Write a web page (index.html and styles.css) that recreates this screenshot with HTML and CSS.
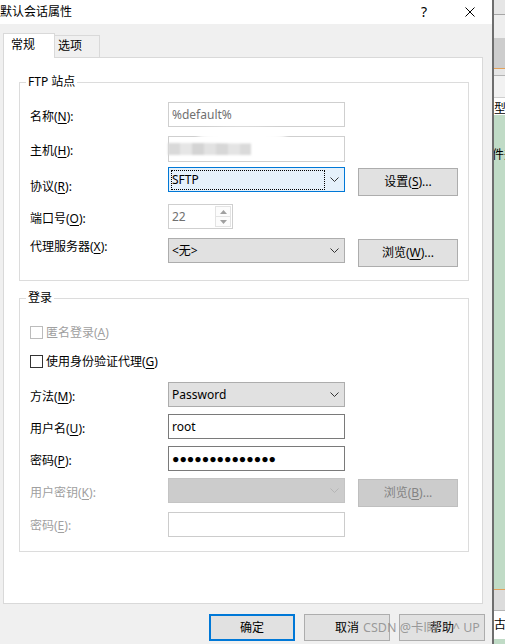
FILE: index.html
```html
<!DOCTYPE html>
<html lang="zh-CN">
<head>
<meta charset="utf-8">
<title>默认会话属性</title>
<link rel="stylesheet" href="styles.css">
</head>
<body>
<div class="screen">
  <div class="dialog">
    <div class="titlebar">
      <span class="title">默认会话属性</span>
      <span class="help">?</span>
      <svg class="close" width="10" height="10" viewBox="0 0 10 10"><path d="M0.5 0.5 L9.5 9.5 M9.5 0.5 L0.5 9.5" stroke="#000" stroke-width="1" fill="none"/></svg>
    </div>
    <div class="body">
      <div class="tabs">
        <div class="tab tab-active">常规</div>
        <div class="tab tab-idle">选项</div>
      </div>
      <div class="panel">
        <fieldset class="group group-ftp">
          <legend>FTP 站点</legend>
          <div class="row h34">
            <span class="lbl">名称(<u>N</u>):</span>
            <div class="field field-soft">%default%</div>
          </div>
          <div class="row h31">
            <span class="lbl">主机(<u>H</u>):</span>
            <div class="field field-soft field-tall">
              <span class="blurred"></span>
              <span class="smudge"></span>
            </div>
          </div>
          <div class="row h37">
            <span class="lbl lbl-low">协议(<u>R</u>):</span>
            <div class="combo combo-focus">
              <span class="focus-rect">SFTP</span>
              <svg class="chev" width="9" height="5" viewBox="0 0 9 5"><polyline points="0.5,0.5 4.5,4.5 8.5,0.5" fill="none" stroke="#333" stroke-width="1"/></svg>
            </div>
            <button class="btn">设置(<u>S</u>)...</button>
          </div>
          <div class="row h34">
            <span class="lbl">端口号(<u>O</u>):</span>
            <div class="spin">
              <span class="spin-val">22</span>
              <span class="spin-btns">
                <span class="spin-btn"><svg width="7" height="4" viewBox="0 0 7 4"><polygon points="3.5,0 7,4 0,4" fill="#a0a0a0"/></svg></span>
                <span class="spin-btn"><svg width="7" height="4" viewBox="0 0 7 4"><polygon points="0,0 7,0 3.5,4" fill="#a0a0a0"/></svg></span>
              </span>
            </div>
          </div>
          <div class="row h29">
            <span class="lbl lbl-high">代理服务器(<u>X</u>):</span>
            <div class="combo">
              <span>&lt;无&gt;</span>
              <svg class="chev" width="9" height="5" viewBox="0 0 9 5"><polyline points="0.5,0.5 4.5,4.5 8.5,0.5" fill="none" stroke="#333" stroke-width="1"/></svg>
            </div>
            <button class="btn">浏览(<u>W</u>)...</button>
          </div>
        </fieldset>

        <fieldset class="group group-login">
          <legend>登录</legend>
          <div class="row h29 check-row disabled">
            <span class="checkbox checkbox-disabled"></span>
            <span>匿名登录(<u>A</u>)</span>
          </div>
          <div class="row h28 check-row">
            <span class="checkbox"></span>
            <span>使用身份验证代理(<u>G</u>)</span>
          </div>
          <div class="row h32">
            <span class="lbl">方法(<u>M</u>):</span>
            <div class="combo">
              <span>Password</span>
              <svg class="chev" width="9" height="5" viewBox="0 0 9 5"><polyline points="0.5,0.5 4.5,4.5 8.5,0.5" fill="none" stroke="#333" stroke-width="1"/></svg>
            </div>
          </div>
          <div class="row h32">
            <span class="lbl">用户名(<u>U</u>):</span>
            <div class="field">root</div>
          </div>
          <div class="row h32">
            <span class="lbl">密码(<u>P</u>):</span>
            <div class="field"><span class="dots">●●●●●●●●●●●●●●</span></div>
          </div>
          <div class="row h34">
            <span class="lbl disabled">用户密钥(<u>K</u>):</span>
            <div class="combo combo-disabled">
              <span></span>
              <svg class="chev" width="9" height="5" viewBox="0 0 9 5"><polyline points="0.5,0.5 4.5,4.5 8.5,0.5" fill="none" stroke="#b5b5b5" stroke-width="1"/></svg>
            </div>
            <button class="btn btn-disabled">浏览(<u>B</u>)...</button>
          </div>
          <div class="row h25">
            <span class="lbl lbl-tight disabled">密码(<u>E</u>):</span>
            <div class="field field-disabled"></div>
          </div>
        </fieldset>
      </div>
      <div class="actions">
        <button class="btn btn-action btn-default">确定</button>
        <button class="btn btn-action">取消</button>
        <button class="btn btn-action">帮助</button>
      </div>
    </div>
    <div class="watermark">CSDN @卡l睡 ^ ^ UP</div>
  </div>
  <div class="backwin">
    <div class="seg s-top"></div>
    <div class="seg line-dark"></div>
    <div class="seg s-light"></div>
    <div class="seg s-mid"></div>
    <div class="seg line-orange"></div>
    <div class="seg s-strip"></div>
    <div class="seg line-grey"></div>
    <div class="seg s-head"></div>
    <div class="seg line-soft"></div>
    <div class="seg s-col">型</div>
    <div class="seg s-green"><span class="green-text">件夹</span></div>
    <div class="seg line-orange"></div>
    <div class="seg s-foot"></div>
    <div class="seg line-grey"></div>
    <div class="seg s-status">古讠</div>
    <div class="seg s-green-end"></div>
  </div>
</div>
</body>
</html>
```
FILE: styles.css
```css
* { box-sizing: border-box; }
html, body { margin: 0; padding: 0; }
body {
  width: 505px;
  height: 644px;
  overflow: hidden;
  font-family: "Noto Sans", "Noto Sans CJK SC", sans-serif;
  font-size: 12px;
  line-height: 16px;
  color: #000;
  background: #f0f0f0;
}
u { text-decoration: underline; text-underline-offset: 2px; }

.screen { display: flex; height: 644px; }

.dialog {
  width: 492px;
  flex: none;
  display: flex;
  flex-direction: column;
  position: relative;
  background: #f0f0f0;
}

/* title bar */
.titlebar {
  height: 24px;
  background: #fff;
  display: flex;
  align-items: center;
}
.title { flex: 1; }
.help {
  width: 14px;
  text-align: center;
  font-size: 14px;
  margin-right: 34px;
}
.close { margin-right: 17px; display: block; }

/* body */
.body {
  flex: 1;
  display: flex;
  flex-direction: column;
  padding: 9px 7px 3px 3px;
}

.tabs {
  display: flex;
  align-items: flex-end;
  height: 24px;
}
.tab {
  border: 1px solid #d9d9d9;
  border-bottom: none;
}
.tab-active {
  width: 52px;
  height: 25px;
  margin-bottom: -1px;
  background: #fff;
  padding: 3px 0 0 7px;
  position: relative;
  z-index: 1;
}
.tab-idle {
  width: 46px;
  height: 22px;
  margin-left: -1px;
  background: #f0f0f0;
  padding: 2px 0 0 3px;
}

.panel {
  width: 480px;
  height: 547px;
  background: #fff;
  border: 1px solid #d9d9d9;
}

/* group boxes */
.group {
  width: 450px;
  margin: 0 0 0 15px;
  border: 1px solid #dcdcdc;
  padding: 12px 0 13px 0;
  min-width: 0;
}
.group legend {
  margin-left: 6px;
  padding: 0 2px;
  line-height: 16px;
}
.group-ftp { margin-top: 16px; }
.group-login { margin-top: 9px; padding-top: 19px; padding-bottom: 14px; }

.row {
  display: flex;
  align-items: flex-start;
  padding-left: 10px;
}
.h25 { height: 25px; }
.h28 { height: 28px; }
.h29 { height: 29px; }
.h31 { height: 31px; }
.h32 { height: 32px; }
.h34 { height: 34px; }
.h37 { height: 37px; }

.lbl { width: 138px; margin-top: 7px; flex: none; }
.lbl-low { margin-top: 12px; }
.lbl-high { margin-top: 1px; }
.lbl-tight { margin-top: 6px; }
.disabled { color: #a0a0a0; }

/* text fields */
.field {
  width: 177px;
  height: 25px;
  border: 1px solid #7a7a7a;
  background: #fff;
  padding: 0 3px;
  display: flex;
  align-items: center;
  position: relative;
}
.field-soft { border-color: #cfcfcf; color: #707070; }
.field-tall { height: 26px; }
.field-disabled { border-color: #cccccc; }

.blurred {
  width: 83px;
  height: 12px;
  margin-left: -4px;
  background: linear-gradient(90deg, #d9d9d9 0 12px, #e6e6e6 12px 24px, #d4d4d4 24px 36px, #e2e2e2 36px 48px, #d7d7d7 48px 60px, #e4e4e4 60px 72px, #dadada 72px 83px);
  filter: blur(1px);
}
.smudge {
  position: absolute;
  left: 28px;
  top: -9px;
  width: 90px;
  height: 14px;
  border-radius: 50%;
  background: #fff;
  filter: blur(2px);
}

.dots {
  font-family: "Liberation Sans", sans-serif;
  font-size: 12.3px;
  letter-spacing: 0;
}

/* combo boxes */
.combo {
  width: 177px;
  height: 25px;
  border: 1px solid #adadad;
  background: #e1e1e1;
  display: flex;
  align-items: center;
  justify-content: space-between;
  padding: 0 5px 0 3px;
  flex: none;
}
.combo-focus {
  border-color: #0078d7;
  background: #e5f1fb;
  padding: 0 5px 0 2px;
}
.focus-rect {
  width: 154px;
  height: 20px;
  border: 1px dotted #000;
  display: flex;
  align-items: center;
}
.combo-disabled {
  background: #cccccc;
  border-color: #c4c4c4;
}
.chev { display: block; }

/* spin */
.spin {
  width: 65px;
  height: 25px;
  border: 1px solid #cfcfcf;
  background: #fff;
  display: flex;
}
.spin-val {
  flex: 1;
  padding-left: 3px;
  display: flex;
  align-items: center;
  color: #707070;
}
.spin-btns {
  width: 17px;
  display: flex;
  flex-direction: column;
  padding: 1px 1px 1px 0;
}
.spin-btn {
  flex: 1;
  display: flex;
  align-items: center;
  justify-content: center;
  border: 1px solid #e3e3e3;
  background: #fcfcfc;
}
.spin-btn + .spin-btn { border-top: none; }
.spin-btn svg { display: block; }

/* buttons */
.btn {
  font: inherit;
  color: #000;
  width: 100px;
  height: 28px;
  margin: 1px 0 0 13px;
  padding: 0;
  border: 1px solid #adadad;
  background: #e1e1e1;
  line-height: 16px;
}
.btn-disabled {
  background: #cccccc;
  border-color: #bfbfbf;
  color: #838383;
}

/* checkboxes */
.check-row { display: flex; align-items: flex-start; }
.check-row > span { line-height: 16px; }
.checkbox {
  width: 13px;
  height: 13px;
  border: 1px solid #333;
  background: #fff;
  margin: 1px 3px 0 0;
  flex: none;
}
.checkbox-disabled { border-color: #bcbcbc; }

/* dialog buttons */
.actions {
  display: flex;
  justify-content: flex-end;
  gap: 9px;
  margin-top: 10px;
}
.btn-action {
  width: 86px;
  height: 27px;
  margin: 0;
}
.btn-default {
  border: 2px solid #0078d7;
}

.watermark {
  position: absolute;
  left: 363px;
  top: 620px;
  color: rgba(140, 140, 140, 0.85);
  font-size: 12.5px;
  white-space: nowrap;
}

/* window behind */
.backwin {
  flex: 1;
  border-left: 2px solid #6e6e6e;
  display: flex;
  flex-direction: column;
  overflow: hidden;
  background: #fff;
}
.seg { flex: none; overflow: hidden; white-space: nowrap; }
.s-top { height: 14px; background: #e6e6e6; }
.line-dark { height: 1px; background: #a6a6a6; }
.s-light { height: 23px; background: #eeeeee; }
.s-mid { height: 30px; background: #cdcdcd; }
.line-orange { height: 1px; background: #e3a15a; }
.s-strip { height: 6px; background: #e6e6e6; }
.line-grey { height: 1px; background: #b4b4b4; }
.s-head { height: 21px; background: #f2f2f2; }
.line-soft { height: 1px; background: #cfcfcf; }
.s-col { height: 17px; background: #fff; line-height: 17px; padding-top: 2px; }
.s-green { height: 474px; background: #c0dbc6; padding-top: 32px; }
.green-text { display: block; margin-left: -2px; }
.s-foot { height: 20px; background: #dcdcdc; }
.s-status { height: 28px; background: #fff; line-height: 28px; }
.s-green-end { height: 5px; background: #c0dbc6; }
```
